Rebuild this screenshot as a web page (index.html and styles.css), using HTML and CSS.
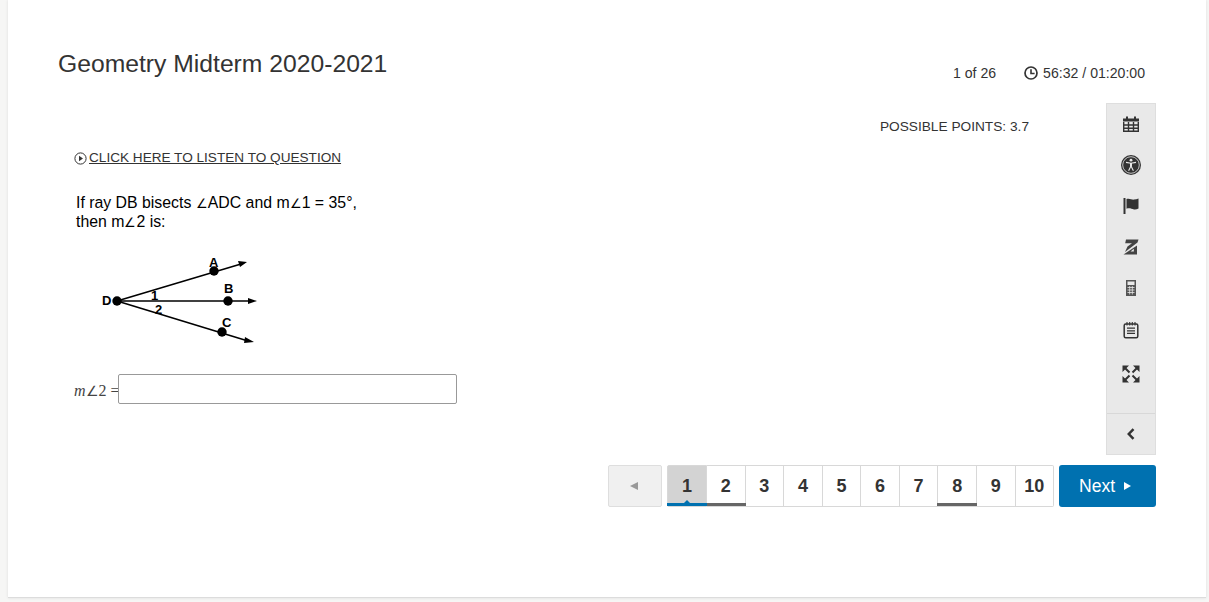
FILE: index.html
```html
<!DOCTYPE html>
<html lang="en">
<head>
  <meta charset="UTF-8" />
  <title>Geometry Midterm 2020-2021</title>
  <link rel="stylesheet" href="styles.css">
</head>

<body>
  <div class="sheet">
    <div class="header">
      <h1 class="title">Geometry Midterm 2020-2021</h1>
      <div class="status">
        <span class="count">1 of 26</span>
        <span class="timer">
          <svg class="clock" viewBox="0 0 14 14" width="14" height="14">
            <circle cx="7" cy="7" r="6" fill="none" stroke="#333" stroke-width="1.7"/>
            <path d="M7 3.200V7.500H10.600" fill="none" stroke="#333" stroke-width="1.600"/>
          </svg>
          56:32 / 01:20:00
        </span>
      </div>
    </div>

    <div class="main">
      <div class="question">
        <div class="points">POSSIBLE POINTS: 3.7</div>

        <div class="listen">
          <svg viewBox="0 0 13 13" width="13" height="13">
            <circle cx="6.500" cy="6.500" r="5.600" fill="none" stroke="#333" stroke-width="1"/>
            <path d="M5 3.800L9 6.500L5 9.200Z" fill="#333"/>
          </svg>
          <a class="listen-link">CLICK HERE TO LISTEN TO QUESTION</a>
        </div>

        <p class="prompt">If ray DB bisects <span class="angle">∠</span>ADC and m<span class="angle">∠</span>1 = 35°,<br>then m<span class="angle">∠</span>2 is:</p>

        <svg class="figure" viewBox="0 0 170 100" width="170" height="100">
          <g stroke="#000" stroke-width="1.600" fill="none">
            <path d="M22 47L146 10"/>
            <path d="M22 47H156"/>
            <path d="M22 47L153 87"/>
          </g>
          <path d="M152 8L143 7L145 13Z M162 47L153 44V50Z M159 88L150 83L149 89Z" fill="#000"/>
          <circle cx="22" cy="47" r="4.700"/>
          <circle cx="119" cy="17" r="4.700"/>
          <circle cx="133" cy="47" r="4.700"/>
          <circle cx="127" cy="78" r="4.700"/>
          <g class="figure-label">
            <text x="7" y="51">D</text>
            <text x="114" y="13">A</text>
            <text x="129" y="39">B</text>
            <text x="127" y="73">C</text>
            <text x="56" y="46">1</text>
            <text x="60" y="60">2</text>
          </g>
        </svg>

        <div class="answer">
          <span class="math"><i>m</i><span class="math-angle">∠</span>2 =</span>
          <input class="answer-box" type="text" />
        </div>
      </div>

      <div class="toolbar">
        <div class="tools">
          <svg class="tool" viewBox="0 0 18 18">
            <path d="M4 1.500h2v2h6v-2h2v2h3v3H1v-3h3z" fill="#333"/>
            <path d="M1.700 7v9.300h14.600V7M1.700 10h14.600M1.700 13.200h14.600M6.500 7v9.300M11.500 7v9.300" fill="none" stroke="#333" stroke-width="1.400"/>
          </svg>
          <svg class="tool tool-wide" viewBox="0 0 20 20">
            <circle cx="10" cy="10" r="10" fill="#333"/>
            <circle cx="10" cy="10" r="8.300" fill="none" stroke="#e9e9e9" stroke-width=".8"/>
            <circle cx="10" cy="5.200" r="1.400" fill="#e9e9e9"/>
            <path d="M5 7.400L10 8.200L15 7.400M10 11L7.600 15.800M10 11L12.400 15.800" fill="none" stroke="#e9e9e9" stroke-width="1.100"/>
            <path d="M10 8V11.500" stroke="#e9e9e9" stroke-width="2"/>
          </svg>
          <svg class="tool" viewBox="0 0 18 18">
            <path d="M1.500 1h2v16h-2z" fill="#333"/>
            <path d="M4.500 2c3-1 5.500 1 7.500.6c1.600-.3 3-.5 4.500-1.100v10c-1.500.8-3 1.100-4.500.9c-2.500-.4-4.500-1.700-7.500-.6z" fill="#333"/>
          </svg>
          <svg class="tool" viewBox="0 0 18 18">
            <path d="M4 1.500h12.500l-1 3L3 14l2.500-5.500L10 5.200H3.200z" fill="#444"/>
            <path d="M15 7.500V16.500H1.500z" fill="#444"/>
            <path d="M8.500 13.500h3.300v-2.800z" fill="#e9e9e9"/>
          </svg>
          <svg class="tool tool-small" viewBox="0 0 12 18">
            <path d="M1 1h10v16H1zM2.500 2.500v3.500h7V2.500z" fill="#555" fill-rule="evenodd"/>
            <path d="M2.500 8.500h7M2.500 11h7M2.500 13.500h7M4.700 7v8.500M7.300 7v8.500" stroke="#e9e9e9" stroke-width=".8"/>
          </svg>
          <svg class="tool tool-notes" viewBox="0 0 18 18">
            <rect x="2.200" y="3" width="13.600" height="13.800" rx="1.500" fill="none" stroke="#333" stroke-width="1.500"/>
            <path d="M5 1v3.500M7.700 1v3.500M10.300 1v3.500M13 1v3.500" stroke="#333" stroke-width="1.100"/>
            <path d="M5 7.200h8M5 9.800h8M5 12.400h8" stroke="#333" stroke-width="1.300"/>
          </svg>
          <svg class="tool tool-expand" viewBox="0 0 18 18">
            <path d="M.5.500h6.500L.5 7zM17.500.500H11L17.500 7zM.5 17.500H7L.5 11zM17.500 17.500H11L17.500 11z" fill="#333"/>
            <path d="M3 3L7.500 7.500M15 3L10.500 7.500M3 15L7.500 10.500M15 15L10.500 10.500" stroke="#333" stroke-width="2"/>
          </svg>
        </div>
        <div class="collapse">
          <svg viewBox="0 0 10 12" width="10" height="12">
            <path d="M7.500 1.200L2.800 6l4.700 4.800" fill="none" stroke="#333" stroke-width="2.500"/>
          </svg>
        </div>
      </div>
    </div>

    <div class="pager">
      <button class="prev"><span class="arrow-left"></span></button>
      <div class="pages">
        <button class="page current">1</button>
        <button class="page seen">2</button>
        <button class="page">3</button>
        <button class="page">4</button>
        <button class="page">5</button>
        <button class="page">6</button>
        <button class="page">7</button>
        <button class="page seen">8</button>
        <button class="page">9</button>
        <button class="page">10</button>
      </div>
      <button class="next">Next <span class="arrow-right"></span></button>
    </div>
  </div>
</body>
</html>
```

FILE: styles.css
```css
* {
  box-sizing: border-box;
}

body {
  margin: 0;
  height: 602px;
  overflow: hidden;
  background-color: #f6f6f5;
  font-family: "Liberation Sans", Arial, sans-serif;
  color: #333;
}

.sheet {
  width: 1198px;
  height: 598px;
  margin-left: 8px;
  padding: 0 50px;
  background-color: #fff;
  border-bottom: 1px solid #dcdcdc;
  box-shadow: 0 0 3px rgba(0, 0, 0, 0.1);
}

.header {
  display: flex;
  justify-content: space-between;
  height: 103px;
  padding-top: 48px;
}

.title {
  margin: 0;
  font-size: 24.7px;
  font-weight: 400;
  line-height: 32px;
}

.status {
  display: flex;
  gap: 28px;
  padding-top: 15px;
  padding-right: 11px;
  font-size: 14.1px;
  line-height: 20px;
}

.timer {
  display: flex;
  align-items: center;
  gap: 5px;
  height: 20px;
}

.main {
  display: flex;
  height: 352px;
}

.question {
  flex: 1;
  padding-left: 16px;
}

.points {
  margin-top: 16px;
  padding-right: 77px;
  text-align: right;
  font-size: 13.7px;
  line-height: 16px;
}

.listen {
  display: flex;
  align-items: center;
  gap: 2px;
  margin-top: 15px;
  font-size: 13.6px;
  line-height: 16px;
}

.listen-link {
  text-decoration: underline;
}

.prompt {
  margin: 27px 0 0 2px;
  font-size: 15.85px;
  line-height: 19px;
  color: #000;
}

.angle {
  font-size: 13px;
  line-height: 1;
}

.figure {
  display: block;
  margin: 23px 0 0 21px;
}

.figure-label {
  font-size: 13px;
  font-weight: 700;
  fill: #000;
}

.answer {
  display: flex;
  align-items: center;
  margin-top: 20px;
}

.math {
  width: 44px;
  padding-top: 3px;
  font-family: "Liberation Serif", serif;
  font-size: 16px;
  white-space: nowrap;
  color: #444;
}

.math-angle {
  font-size: 14px;
}

.answer-box {
  width: 339px;
  height: 30px;
  border: 1px solid #999;
  border-radius: 2px;
  background-color: #fff;
}

.toolbar {
  display: flex;
  flex-direction: column;
  width: 50px;
  background-color: #e9e9e9;
  border: 1px solid #dedede;
}

.tools {
  display: flex;
  flex-direction: column;
  align-items: center;
  flex: 1;
  gap: 23px;
  padding-top: 11px;
}

.tool {
  width: 18px;
  height: 18px;
  flex: none;
}

.tool-wide {
  width: 20px;
  height: 20px;
  margin: -1px 0;
}

.tool-small {
  width: 12px;
}

.tool-notes {
  margin-top: 1px;
}

.tool-expand {
  margin-top: 3px;
}

.collapse {
  display: flex;
  align-items: center;
  justify-content: center;
  height: 41px;
  border-top: 1px solid #d8d8d8;
}

.pager {
  display: flex;
  justify-content: flex-end;
  gap: 5px;
  margin-top: 10px;
}

button {
  font-family: "Liberation Sans", Arial, sans-serif;
  padding: 0;
  height: 42px;
}

.prev {
  display: flex;
  align-items: center;
  justify-content: center;
  width: 54px;
  padding-right: 3px;
  background-color: #f0f0f0;
  border: 1px solid #dedede;
  border-radius: 2px;
}

.arrow-left {
  border-top: 4px solid transparent;
  border-bottom: 4px solid transparent;
  border-right: 8px solid #999;
}

.pages {
  display: flex;
  width: 387px;
}

.page {
  position: relative;
  flex: 1;
  background-color: #fff;
  border: 1px solid #d8d8d8;
  border-left: none;
  font-size: 18px;
  font-weight: 700;
  color: #333;
}

.page:first-child {
  flex: none;
  width: 40px;
  border-left: 1px solid #d8d8d8;
  border-radius: 2px 0 0 2px;
}

.page:last-child {
  border-radius: 0 2px 2px 0;
}

.current {
  background-color: #d3d3d3;
}

.current::before {
  content: "";
  position: absolute;
  left: 50%;
  bottom: 2px;
  margin-left: -4px;
  border-left: 4px solid transparent;
  border-right: 4px solid transparent;
  border-bottom: 4px solid #0071b0;
}

.current::after,
.seen::after {
  content: "";
  position: absolute;
  left: -1px;
  right: -1px;
  bottom: 0;
  height: 3px;
  background-color: #666;
}

.current::after {
  z-index: 1;
  background-color: #0071b0;
}

.next {
  display: flex;
  align-items: center;
  gap: 9px;
  width: 97px;
  padding-left: 20px;
  background-color: #0071b0;
  border: none;
  border-radius: 3px;
  font-size: 17.6px;
  color: #fff;
}

.arrow-right {
  border-top: 4px solid transparent;
  border-bottom: 4px solid transparent;
  border-left: 7px solid #fff;
}
```
